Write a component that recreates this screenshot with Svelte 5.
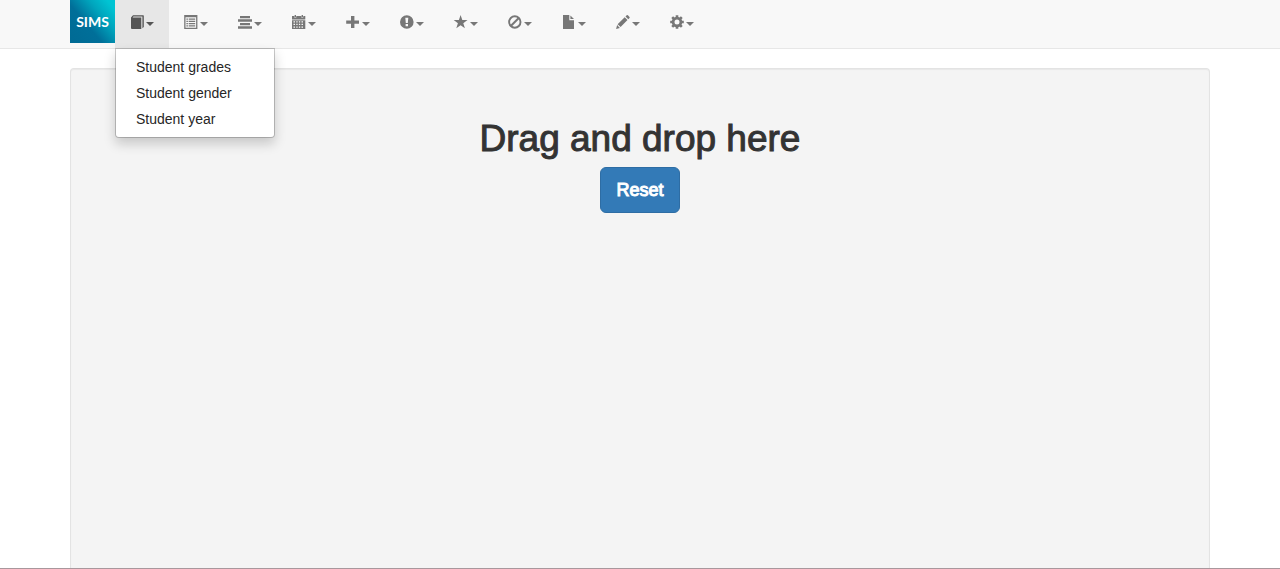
<script>
  let open = $state('book');

  const links = ['Student grades', 'Student gender', 'Student year'];
  const items = [
    { id: 'book', label: 'Student reports' },
    { id: 'list', label: 'Lists' },
    { id: 'align', label: 'Layout' },
    { id: 'calendar', label: 'Calendar' },
    { id: 'plus', label: 'Add' },
    { id: 'alert', label: 'Alerts' },
    { id: 'star', label: 'Favourites' },
    { id: 'ban', label: 'Exclusions' },
    { id: 'file', label: 'Files' },
    { id: 'pencil', label: 'Edit' },
    { id: 'cog', label: 'Settings' }
  ];

  function toggle(id) {
    open = open === id ? '' : id;
  }
</script>

<div class="page">
  <nav class="navbar">
    <div class="container bar">
      <a class="brand" href="#home">SIMS</a>
      <ul class="items">
        {#each items as item}
          <li class="item">
            <button
              type="button"
              class="toggle"
              class:open={open === item.id}
              aria-label={item.label}
              aria-expanded={open === item.id}
              onclick={() => toggle(item.id)}
            >
              <svg class="icon" viewBox="0 0 14 14" aria-hidden="true">
                {#if item.id === 'book'}
                  <path d="M1 2.600h10.300V14H2a1 1 0 0 1-1-1zM1 2.600 3 .2h10.200q.6 0 .6.600V12l-1.400 1.200V1.500H3.400L2.200 3z" />
                {:else if item.id === 'list'}
                  <path fill-rule="evenodd" d="M.2 0h13.200v14H.2zM1.500 2.300v10.400h10.600V2.300z" />
                  <path d="M2.400 3.500h1.500v1.200H2.400zm2.300 0h6.500v1.200H4.700zM2.400 5.800h1.500V7H2.400zm2.300 0h6.500V7H4.700zM2.400 8h1.500v1.200H2.400zm2.300 0h6.500v1.200H4.700zM2.400 10.300h1.500v1.200H2.400zm2.300 0h6.500v1.200H4.700z" />
                {:else if item.id === 'align'}
                  <path d="M2 .9h10v2.300H2zM0 4.300h14v2.400H0zM2 7.900h10v2.300H2zM0 11.300h14v2.400H0z" />
                {:else if item.id === 'calendar'}
                  <path d="M0 1h2.300v1.500h2V1h5v1.500h2V1h2v3.500H0zM2.600 0H4v2H2.600zm7 0H11v2H9.600z" />
                  <path fill-rule="evenodd" d="M0 5.200h13.300V14H0zM1.500 6.200v1.300h1.500V6.200zm2.800 0v1.300h1.300V6.200zm2.600 0v1.300h1.300V6.200zm2.600 0v1.300h1.500V6.200zM1.500 8.800v1.300h1.500V8.800zm2.800 0v1.300h1.300V8.800zm2.600 0v1.300h1.300V8.800zm2.600 0v1.300h1.500V8.800zM1.500 11.400v1.300h1.500v-1.300zm2.800 0v1.300h1.300v-1.300zm2.600 0v1.300h1.300v-1.300zm2.600 0v1.300h1.500v-1.300z" />
                {:else if item.id === 'plus'}
                  <path d="M5 1h3.400v4.500H13v3.300H8.400V13H5V8.800H.2V5.500H5z" />
                {:else if item.id === 'alert'}
                  <path fill-rule="evenodd" d="M6.800.2a6.800 6.800 0 1 1 0 13.600 6.800 6.800 0 0 1 0-13.600zM5.300 2.800l.5 5.200h2l.5-5.200zm.3 6.200v2.200H8V9z" />
                {:else if item.id === 'star'}
                  <path d="m6.600 0 1.700 5h5.200L9.300 8.200l1.600 5L6.600 10.200l-4.300 3 1.600-5L-.3 5h5.200z" />
                {:else if item.id === 'ban'}
                  <circle cx="6.800" cy="7" r="5.700" fill="none" stroke="currentColor" stroke-width="1.900" />
                  <path d="m2.800 11 8-8" fill="none" stroke="currentColor" stroke-width="2" />
                {:else if item.id === 'file'}
                  <path d="M1 0h6.300v5.200H12V14H1zM8.400.4l3.600 3.700H8.400z" />
                {:else if item.id === 'pencil'}
                  <path d="m.1 13.900 1-4L3.900 12.900zM1.600 9.200 8.700 2.300l2.800 2.800-6.900 7zM9.500 1.500 10.700.3q.6-.5 1.200 0l1.600 1.600q.5.600 0 1.200l-1.200 1.200z" />
                {:else}
                  <circle cx="7" cy="7" r="3.900" fill="none" stroke="currentColor" stroke-width="2.800" />
                  <path d="M7 .2v3m0 7.600v3M.2 7h3m7.600 0h3M2.200 2.200l2 2m5.600 5.600 2 2M11.800 2.200l-2 2m-5.600 5.600-2 2" fill="none" stroke="currentColor" stroke-width="2.600" />
                {/if}
              </svg>
              <span class="caret"></span>
            </button>
            {#if open === item.id}
              <ul class="menu">
                {#each links as link}
                  <li><a href="#report">{link}</a></li>
                {/each}
              </ul>
            {/if}
          </li>
        {/each}
      </ul>
    </div>
  </nav>

  <main class="container content">
    <section class="well">
      <h1>Drag and drop here</h1>
      <button type="button" class="reset">Reset</button>
    </section>
  </main>
</div>

<style>
  :global(body) {
    margin: 0;
    background: #fff;
    color: #333;
    font: 14px/20px "Liberation Sans", Arial, sans-serif;
  }

  .page {
    display: flex;
    flex-direction: column;
    box-sizing: border-box;
    min-height: 100vh;
    border-bottom: 1px solid #a8979c;
  }

  .container {
    box-sizing: border-box;
    width: 100%;
    max-width: 1170px;
    margin: 0 auto;
    padding: 0 15px;
  }

  .navbar {
    background: #f8f8f8;
    border-bottom: 1px solid #e7e7e7;
  }

  .bar {
    display: flex;
    align-items: flex-start;
  }

  .brand {
    width: 45px;
    background: linear-gradient(50deg, #006a94 0%, #006f99 40%, #00a5bd 68%, #00c4d3 90%);
    color: #fff;
    font: 700 14px/43px Lato, sans-serif;
    text-align: center;
    text-decoration: none;
  }

  .items,
  .menu {
    margin: 0;
    padding: 0;
    list-style: none;
  }

  .items {
    display: flex;
  }

  .item {
    position: relative;
  }

  .toggle {
    display: flex;
    align-items: center;
    gap: 2px;
    height: 48px;
    padding: 0 15px 4px;
    border: 0;
    background: transparent;
    color: #777;
    cursor: pointer;
  }

  .toggle.open {
    background: #e7e7e7;
    color: #555;
  }

  .icon {
    width: 14px;
    height: 14px;
    fill: currentColor;
    overflow: visible;
  }

  .caret {
    margin-top: 4px;
    border: 4px solid transparent;
    border-top-color: currentColor;
    border-bottom: 0;
  }

  .menu {
    position: absolute;
    top: 100%;
    left: 0;
    z-index: 1;
    box-sizing: border-box;
    min-width: 160px;
    padding: 5px 0;
    border: 1px solid rgba(0, 0, 0, 0.2);
    border-radius: 0 0 4px 4px;
    background: #fff;
    background-clip: padding-box;
    box-shadow: 0 6px 12px rgba(0, 0, 0, 0.18);
  }

  .menu a {
    display: block;
    padding: 3px 20px;
    color: #262626;
    text-decoration: none;
    white-space: nowrap;
  }

  .content {
    display: flex;
    flex: 1;
    padding-top: 19px;
  }

  .well {
    display: flex;
    flex: 1;
    flex-direction: column;
    align-items: center;
    gap: 8px;
    padding: 50px 20px 20px;
    border: 1px solid #e3e3e3;
    border-bottom: 0;
    border-radius: 4px 4px 0 0;
    background: #f4f4f4;
    box-shadow: inset 0 1px 1px rgba(0, 0, 0, 0.05);
  }

  h1 {
    margin: 0;
    font-size: 37px;
    font-weight: 400;
    line-height: 40px;
    -webkit-text-stroke: 1px currentColor;
  }

  .reset {
    padding: 10px 15px;
    border: 1px solid #2e6da4;
    border-radius: 6px;
    background: #337ab7;
    color: #fff;
    font: 400 18px/24px "Liberation Sans", Arial, sans-serif;
    -webkit-text-stroke: 1px currentColor;
    cursor: pointer;
  }
</style>
